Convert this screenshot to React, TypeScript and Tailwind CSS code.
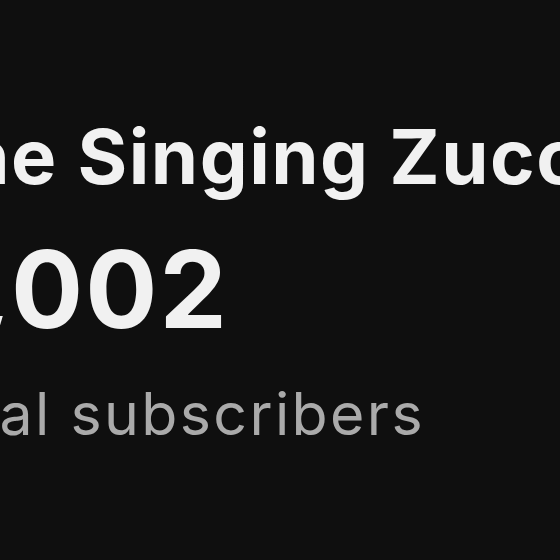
export default function App() {
  return (
    <div className="w-[560px] h-[560px] overflow-hidden bg-[#0f0f0f] font-['Inter',sans-serif]">
      <div className="ml-[-80px] pt-[118px] flex flex-col whitespace-nowrap">
        <h1 className="ml-[-10px] text-[76px] leading-none font-bold tracking-[0.02em] text-[#f1f1f1]">The Singing Zucchini</h1>
        <p className="mt-[42px] ml-[8px] text-[107px] leading-none font-bold tracking-[0.02em] text-[#f1f1f1]">1,002</p>
        <p className="mt-[41px] ml-[-16px] text-[59px] leading-none tracking-[0.04em] text-[#aaaaaa]">Total subscribers</p>
      </div>
    </div>
  );
}
